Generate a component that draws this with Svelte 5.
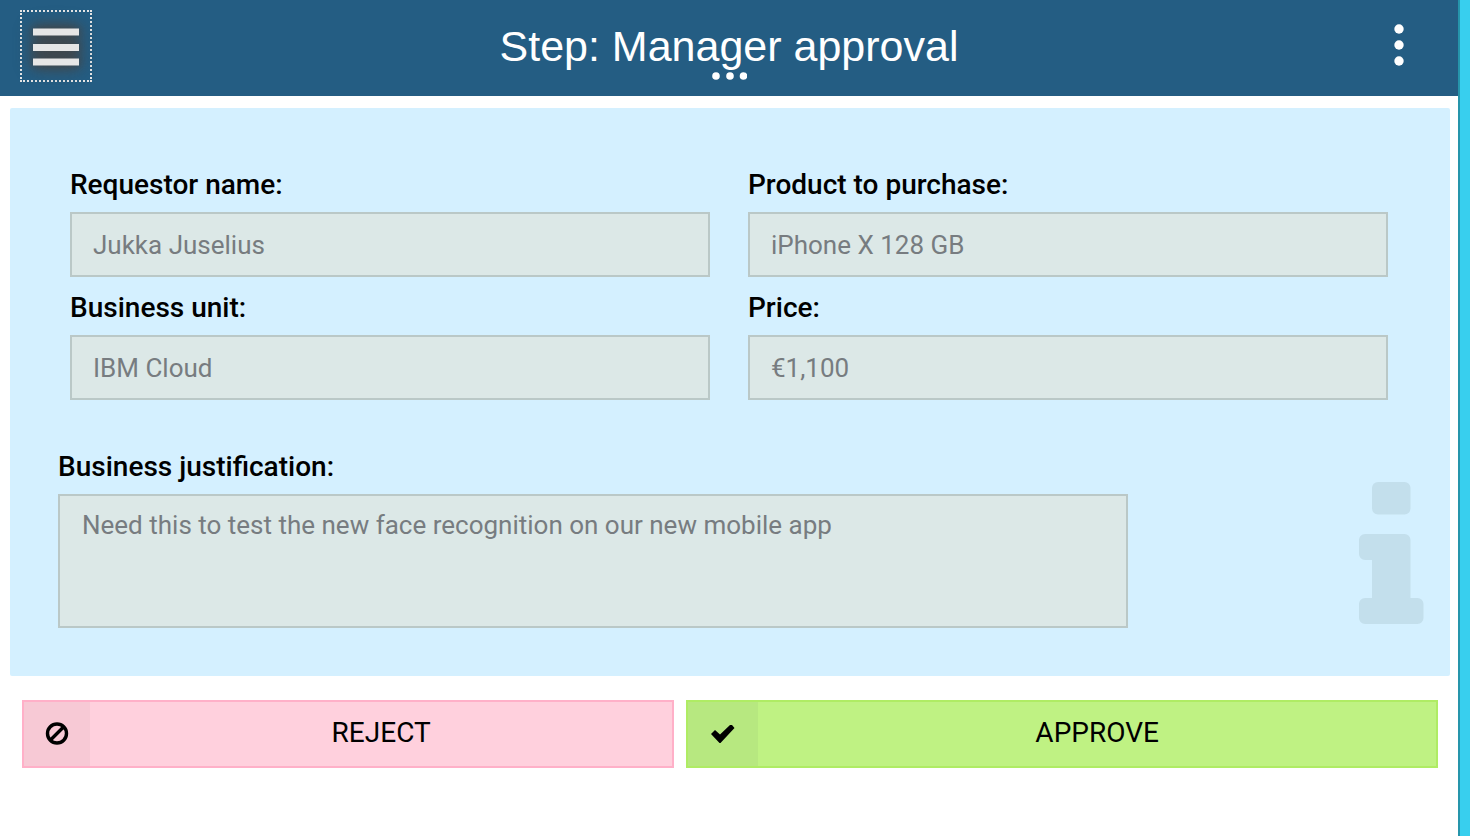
<script>
  const title = 'Step: Manager approval'

  const fields = [
    { id: 'requestor', label: 'Requestor name:', value: 'Jukka Juselius' },
    { id: 'product', label: 'Product to purchase:', value: 'iPhone X 128 GB' },
    { id: 'unit', label: 'Business unit:', value: 'IBM Cloud' },
    { id: 'price', label: 'Price:', value: '€1,100' }
  ]

  const justification = 'Need this to test the new face recognition on our new mobile app'
</script>

<div class="screen">
  <header class="header">
    <button class="menu" type="button" aria-label="Menu">
      <svg width="46" height="38" viewBox="0 0 46 38" aria-hidden="true">
        <path d="M0 .5h46v7H0zM0 16h46v7H0zM0 30.5h46v7H0z" fill="#e6e6e6" />
      </svg>
    </button>
    <h1>{title}</h1>
    <button class="more" type="button" aria-label="More options">
      <svg width="10" height="42" viewBox="0 0 10 42" fill="#fff" aria-hidden="true">
        <circle cx="5" cy="5" r="4.7" />
        <circle cx="5" cy="21" r="4.7" />
        <circle cx="5" cy="37" r="4.7" />
      </svg>
    </button>
    <button class="expand" type="button" aria-label="Show details">
      <svg width="36" height="8" viewBox="0 0 36 8" fill="#fff" aria-hidden="true">
        <circle cx="5" cy="4" r="3.8" />
        <circle cx="19" cy="4" r="3.8" />
        <circle cx="32.5" cy="4" r="3.8" />
      </svg>
    </button>
  </header>

  <main>
    <section class="panel">
      <div class="fields">
        {#each fields as field}
          <div class="field">
            <label for={field.id}>{field.label}</label>
            <input id={field.id} type="text" value={field.value} readonly />
          </div>
        {/each}
      </div>

      <div class="field field--wide">
        <label for="justification">Business justification:</label>
        <textarea id="justification" value={justification} readonly></textarea>
      </div>

      <svg class="info" width="66" height="142" viewBox="0 0 66 142" fill="#c3dfec" aria-hidden="true">
        <rect x="14" y="0" width="38.5" height="32.5" rx="6" />
        <path d="M7 52h39.500a6 6 0 0 1 6 6v58h7a6 6 0 0 1 6 6v14a6 6 0 0 1-6 6H7a6 6 0 0 1-6-6v-14a6 6 0 0 1 6-6h7V78H7a6 6 0 0 1-6-6V58a6 6 0 0 1 6-6z" />
      </svg>
    </section>

    <div class="actions">
      <button class="action action--reject" type="button">
        <span class="icon">
          <svg width="24" height="24" viewBox="0 0 24 24" fill="none" stroke="#000" stroke-width="3.4" aria-hidden="true">
            <circle cx="12" cy="11.500" r="9.500" />
            <path d="M5 18.500L19 4.500" />
          </svg>
        </span>
        <span class="text">REJECT</span>
      </button>
      <button class="action action--approve" type="button">
        <span class="icon">
          <svg width="24" height="18" viewBox="0 0 24 18" aria-hidden="true">
            <path d="M0 9l4-4 5 4.500L19 0h2l2.500 3-14 15h-1z" fill="#000" />
          </svg>
        </span>
        <span class="text">APPROVE</span>
      </button>
    </div>
  </main>
</div>

<style>
  :global(body) {
    margin: 0;
  }

  .screen {
    box-sizing: border-box;
    min-height: 100vh;
    border-right: 10px solid #38cfee;
    box-shadow: inset -2px 0 #2695ab;
    padding-right: 2px;
    background: #fff;
    font-family: Roboto, 'Liberation Sans', sans-serif;
    font-size: 28px;
    line-height: 32px;
    color: #000;
  }

  button {
    margin: 0;
    padding: 0;
    border: 0;
    background: none;
    color: inherit;
    font: inherit;
    cursor: pointer;
  }

  svg {
    display: block;
  }

  .header {
    position: relative;
    display: flex;
    align-items: center;
    justify-content: space-between;
    box-sizing: border-box;
    height: 96px;
    padding: 0 20px;
    background: #245d83;
    color: #fff;
  }

  .header h1 {
    margin: 0;
    padding-bottom: 4px;
    font-family: 'Liberation Sans', Arial, sans-serif;
    font-size: 43px;
    font-weight: 400;
    line-height: 48px;
  }

  .menu,
  .more {
    display: flex;
    align-items: center;
    justify-content: center;
    box-sizing: border-box;
    width: 72px;
    height: 72px;
    margin-bottom: 4px;
  }

  .menu {
    border: 2px dotted #e6e6e6;
  }

  .menu svg {
    margin-top: 2px;
    overflow: visible;
    filter: drop-shadow(0 0 8px #444) drop-shadow(0 0 4px #444);
  }

  .more {
    padding-right: 6px;
    padding-bottom: 2px;
  }

  .expand {
    position: absolute;
    bottom: 16px;
    left: 50%;
    transform: translateX(-50%);
  }

  .panel {
    position: relative;
    margin: 12px 8px 24px 10px;
    padding: 61px 62px 48px 48px;
    border-radius: 2px;
    background: #d4f0ff;
  }

  .fields {
    display: grid;
    grid-template-columns: 1fr 1fr;
    gap: 15px 38px;
    margin: 0 0 51px 12px;
  }

  .field {
    display: flex;
    flex-direction: column;
    gap: 11px;
  }

  .field--wide {
    margin-right: 260px;
  }

  label {
    font-weight: 500;
  }

  input,
  textarea {
    box-sizing: border-box;
    width: 100%;
    margin: 0;
    border: 2px solid #bac8c7;
    border-radius: 0;
    outline: none;
    background: #dce8e7;
    color: #777c80;
    font: inherit;
    font-size: 26px;
  }

  input {
    height: 65px;
    padding: 0 21px;
  }

  textarea {
    height: 134px;
    padding: 13px 22px;
    resize: none;
  }

  .info {
    position: absolute;
    right: 26px;
    bottom: 52px;
  }

  .actions {
    display: flex;
    gap: 12px;
    padding: 0 20px 24px 22px;
  }

  .action {
    display: flex;
    box-sizing: border-box;
    height: 68px;
    border: 2px solid;
  }

  .action--reject {
    flex: 652 1 0;
    border-color: #ffb0c8;
    background: #ffd0dd;
  }

  .action--approve {
    flex: 752 1 0;
    border-color: #afec64;
    background: #bff283;
  }

  .icon {
    display: flex;
    align-items: center;
    justify-content: center;
    width: 66px;
    height: 100%;
    background: #f7c9d5;
  }

  .action--approve .icon {
    width: 70px;
    background: #b7e880;
  }

  .text {
    flex: 1;
    align-self: center;
    padding-bottom: 2px;
  }
</style>
